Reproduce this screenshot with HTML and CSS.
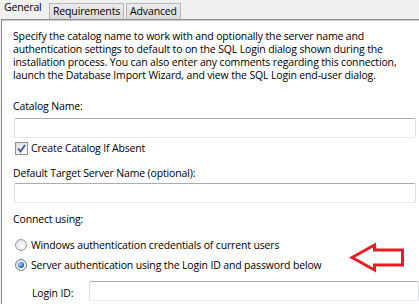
FILE: index.html
```html
<!DOCTYPE html>
<html>
<head>
<meta charset="utf-8">
<link rel="stylesheet" href="styles.css">
</head>
<body>
<div class="window">
  <div class="tabs">
    <div class="tab tab-active">General</div>
    <div class="tab">Requirements</div>
    <div class="tab tab-last">Advanced</div>
  </div>
  <div class="panel">
    <p class="desc">Specify the catalog name to work with and optionally the server name and<br>authentication settings to default to on the SQL Login dialog shown during the<br>installation process. You can also enter any comments regarding this connection,<br>launch the Database Import Wizard, and view the SQL Login end-user dialog.</p>
    <div class="label label-catalog">Catalog Name:</div>
    <div class="input input-catalog"></div>
    <div class="check-row">
      <span class="checkbox"><svg width="9" height="9" viewBox="0 0 9 9"><path d="M1 4.5 L3.5 7.5 L8 1" fill="none" stroke="#3b5998" stroke-width="1.8"/></svg></span>
      <span>Create Catalog If Absent</span>
    </div>
    <div class="label label-server">Default Target Server Name (optional):</div>
    <div class="input input-server"></div>
    <div class="label label-connect">Connect using:</div>
    <div class="radio-row radio-first">
      <span class="radio"></span>
      <span>Windows authentication credentials of current users</span>
    </div>
    <div class="radio-row radio-second">
      <span class="radio radio-on"><span class="dot"></span></span>
      <span>Server authentication using the Login ID and password below</span>
    </div>
    <div class="login-row">
      <span class="login-label">Login ID:</span>
      <div class="input input-login"></div>
    </div>
  </div>
  <svg class="arrow" width="419" height="304" viewBox="0 0 419 304">
    <polygon points="352,257.5 374.5,245 374.5,250 402.5,250 402.5,265 374.5,265 374.5,270" fill="none" stroke="#ed1c24" stroke-width="3" stroke-linejoin="miter"/>
  </svg>
</div>
</body>
</html>
```
FILE: styles.css
```css
html, body {
  margin: 0;
  padding: 0;
  background: #ffffff;
}
body {
  width: 419px;
  height: 304px;
  overflow: hidden;
  font-family: "Open Sans", "Noto Sans", sans-serif;
  font-size: 10.5px;
  letter-spacing: -0.15px;
  color: #000000;
}
.window {
  position: relative;
  width: 419px;
  height: 304px;
  background: #f0f0f0;
}
.tabs {
  display: flex;
  align-items: flex-end;
  height: 19px;
}
.tab {
  box-sizing: border-box;
  height: 16px;
  line-height: 14px;
  padding: 0 3px;
  margin-right: 2px;
  background: linear-gradient(#ebebeb, #dcdcdc);
  border: 1px solid #b6b6b6;
  border-bottom: none;
}
.tab-active {
  height: 19px;
  width: 48px;
  line-height: 15px;
  padding: 0 4px;
  margin-right: 1px;
  background: #f0f0f0;
  border: none;
}
.panel {
  box-sizing: border-box;
  height: 285px;
  margin-left: 1px;
  border-top: 1px solid #8f8f8f;
  border-left: 1px solid #8f8f8f;
  box-shadow: inset 0 1px 0 #c9c9c9;
  background: #ffffff;
  padding: 10px 0 0 11px;
}
.desc {
  margin: 0;
  line-height: 13px;
  white-space: nowrap;
}
.label {
  line-height: 13px;
}
.label-catalog { margin-top: 18px; }
.label-server { margin-top: 12px; }
.label-connect { margin-top: 10px; }
.input {
  box-sizing: border-box;
  height: 20px;
  width: 402px;
  margin-left: 1px;
  border: 1px solid #dbdfe6;
  border-top-color: #abadb3;
  border-bottom-color: #e3e9ef;
  border-radius: 2px;
  background: #ffffff;
}
.input-catalog { margin-top: 5px; }
.input-server { margin-top: 3px; }
.check-row,
.radio-row {
  display: flex;
  align-items: center;
  gap: 3px;
  height: 14px;
  line-height: 13px;
}
.check-row { margin-top: 3px; }
.checkbox {
  box-sizing: border-box;
  width: 13px;
  height: 13px;
  margin-left: 2px;
  border: 1px solid #8e8f8f;
  background: linear-gradient(135deg, #dcdcdc, #ffffff);
  display: flex;
  align-items: center;
  justify-content: center;
}
.radio-first { margin-top: 12px; }
.radio-second { margin-top: 6px; }
.radio {
  box-sizing: border-box;
  width: 12px;
  height: 12px;
  margin-left: 2px;
  margin-right: 1px;
  border-radius: 50%;
  border: 1px solid #9a9a9a;
  background: radial-gradient(circle at 60% 60%, #ffffff, #d8d8d8);
  display: flex;
  align-items: center;
  justify-content: center;
}
.radio-on {
  border-color: #6b8099;
}
.dot {
  width: 6px;
  height: 6px;
  border-radius: 50%;
  background: radial-gradient(circle at 35% 35%, #a7e1ff, #1f6dc2 60%, #0f3d7a);
}
.login-row {
  display: flex;
  align-items: flex-start;
  margin-top: 9px;
}
.login-label {
  width: 57px;
  padding-left: 19px;
  line-height: 13px;
  margin-top: 6px;
}
.input-login {
  width: 330px;
  margin-left: 0;
}
.arrow {
  position: absolute;
  left: 0;
  top: 0;
  pointer-events: none;
}
```
